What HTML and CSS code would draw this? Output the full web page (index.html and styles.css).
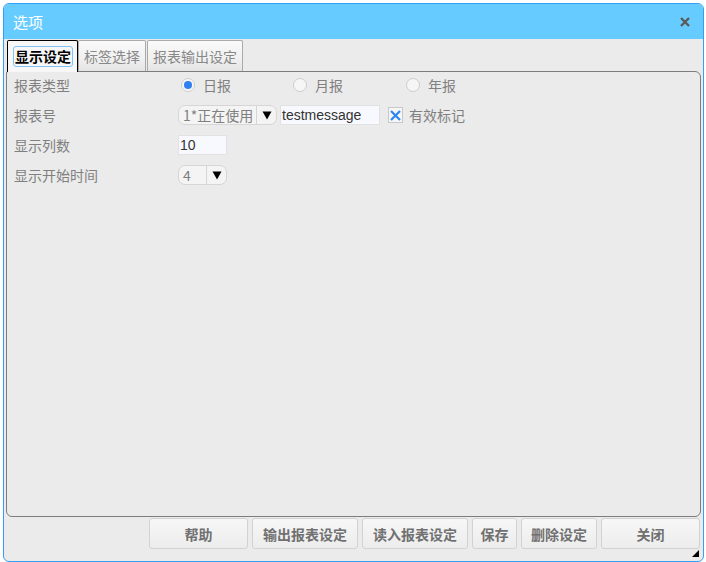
FILE: index.html
```html
<!DOCTYPE html>
<html>
<head>
<meta charset="utf-8">
<link rel="stylesheet" href="styles.css">
</head>
<body>
<div class="dialog">
  <div class="titlebar">
    <span class="title">选项</span>
    <span class="close"><svg width="10" height="10" viewBox="0 0 10 10"><path d="M1 1 L9 9 M9 1 L1 9" stroke="#5a5a5a" stroke-width="2.4" fill="none"/></svg></span>
  </div>
  <div class="body">
    <div class="tabs">
      <div class="tab active"><span class="focus">显示设定</span></div>
      <div class="tab">标签选择</div>
      <div class="tab">报表输出设定</div>
    </div>
    <div class="panel">
      <div class="rows">
        <div class="row">
          <div class="label">报表类型</div>
          <div class="ctrls">
            <label class="radio r1"><span class="rb on"></span>日报</label>
            <label class="radio r2"><span class="rb"></span>月报</label>
            <label class="radio r3"><span class="rb"></span>年报</label>
          </div>
        </div>
        <div class="row">
          <div class="label">报表号</div>
          <div class="ctrls">
            <div class="select w98"><span class="val">1*正在使用</span><span class="arrow"><svg width="10" height="10" viewBox="0 0 10 10"><path d="M0.5 1.5 H9.5 L5 9.5 Z" fill="#000"/></svg></span></div>
            <div class="input w100">testmessage</div>
            <span class="check"><svg width="13" height="13" viewBox="0 0 13 13"><path d="M2 2 L11 11 M11 2 L2 11" stroke="#2f86f0" stroke-width="2.2" fill="none"/></svg></span>
            <span class="checklabel">有效标记</span>
          </div>
        </div>
        <div class="row">
          <div class="label">显示列数</div>
          <div class="ctrls">
            <div class="input w49">10</div>
          </div>
        </div>
        <div class="row">
          <div class="label">显示开始时间</div>
          <div class="ctrls">
            <div class="select w49"><span class="val">4</span><span class="arrow"><svg width="10" height="10" viewBox="0 0 10 10"><path d="M0.5 1.5 H9.5 L5 9.5 Z" fill="#000"/></svg></span></div>
          </div>
        </div>
      </div>
    </div>
    <div class="buttons">
      <button class="btn w99">帮助</button>
      <button class="btn w106">输出报表设定</button>
      <button class="btn w106">读入报表设定</button>
      <button class="btn w45">保存</button>
      <button class="btn w76">删除设定</button>
      <button class="btn w99">关闭</button>
    </div>
    <span class="grip"></span>
  </div>
</div>
</body>
</html>
```
FILE: styles.css
```css
* { box-sizing: border-box; }
html, body { margin: 0; padding: 0; background: #ffffff; }
body {
  width: 706px; height: 562px;
  font-family: "Microsoft YaHei", "Noto Sans CJK SC", "Liberation Sans", sans-serif;
  padding: 3px 2px 0 3px;
}
.dialog {
  width: 701px; height: 559px;
  border: 1px solid #33a0f5;
  border-radius: 6px;
  background: #ebebeb;
  overflow: hidden;
  display: flex; flex-direction: column;
}
.titlebar {
  height: 35px; flex: none;
  background: #66ccff;
  display: flex; align-items: center; justify-content: space-between;
  padding: 0 13px 0 9px;
}
.title { color: #fff; font-size: 15px; }
.close { display: flex; margin-top: 1px; }
.body {
  flex: 1; position: relative;
  padding: 0 2px 0 2px;
  display: flex; flex-direction: column;
}
.tabs { display: flex; height: 32px; padding-left: 1px; align-items: flex-end; }
.tab {
  height: 31px; margin-right: 1px;
  border: 1px solid #aaa; border-bottom: none;
  border-radius: 2px 2px 0 0;
  background: linear-gradient(#fafafa, #f0f0f0 60%, #e4e4e4);
  color: #888; font-size: 14px;
  padding: 0 5px; display: flex; align-items: center;
}
.tab.active {
  height: 32px; width: 71px; background: #f7f7f7; border-color: #000;
  position: relative; top: 1px; z-index: 2;
  color: #000; font-weight: bold; padding: 0 0 0 5px;
  margin-right: 0;
}
.focus { border: 1px solid #7fc3f5; border-radius: 3px; padding: 0 1px; line-height: 19px; }
.panel {
  height: 446px; flex: none;
  border: 1px solid #7d7d7d;
  border-radius: 2px 6px 6px 6px;
  background: #ebebeb;
  padding: 0 0 0 7px;
}
.rows { margin-top: -2px; }
.row { display: flex; align-items: center; height: 30px; }
.label { width: 164px; font-size: 14px; color: #808080; }
.ctrls { display: flex; align-items: center; font-size: 14px; color: #808080; }
.radio { display: flex; align-items: center; }
.r1 { width: 112px; margin-left: 3px; }
.r2 { width: 113px; }
.rb {
  width: 14px; height: 14px; border-radius: 50%;
  border: 1px solid #cdcdcd; background: #f6f6f6;
  margin-right: 8px; position: relative;
}
.rb.on::after {
  content: ""; position: absolute; left: 2px; top: 2px;
  width: 8px; height: 8px; border-radius: 50%; background: #2f80f0;
}
.select {
  height: 20px; border: 1px solid #d6d6d6; border-radius: 7px;
  background: #f4f4f4; display: flex; align-items: center;
  color: #808080; font-size: 14px;
}
.select .val { flex: 1; padding-left: 4px; }
.select .arrow {
  width: 20px; border-left: 1px solid #d6d6d6; height: 18px;
  display: flex; align-items: center; justify-content: center;
}
.select .arrow svg { display: block; }
.w98 { width: 99px; }
.w49 { width: 49px; }
.w100 { width: 100px; }
.input {
  height: 20px; border: 1px solid #e2e2e2; background: #f8f9ff;
  color: #333; font-size: 14px; padding-left: 1px; line-height: 18px;
  font-family: "Liberation Sans", sans-serif;
}
.select + .input { margin-left: 3px; }
.check {
  width: 15px; height: 16px; border: 1px solid #c8c8c8; background: #f6f6f6;
  margin-left: 8px; margin-right: 6px; display: flex; align-items: center; justify-content: center;
}
.check svg { display: block; }
.buttons { display: flex; gap: 4px; padding-left: 143px; margin-top: 1px; }
.btn {
  height: 31px; padding: 0;
  border: 1px solid #d2d2d2; border-radius: 3px;
  background: linear-gradient(#f7f7f7, #ececec);
  color: #707070; font-weight: bold; font-size: 14px;
  font-family: "Microsoft YaHei", "Noto Sans CJK SC", sans-serif;
}
.w99 { width: 99px; }
.w106 { width: 106px; }
.w45 { width: 45px; }
.w76 { width: 76px; }
.grip {
  position: absolute; right: 4px; bottom: 4px;
  width: 0; height: 0;
  border-left: 7px solid transparent; border-bottom: 7px solid #000;
}
```
